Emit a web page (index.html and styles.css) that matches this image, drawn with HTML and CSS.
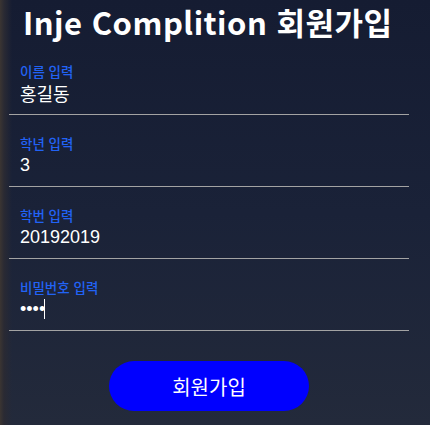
FILE: index.html
```html
<!DOCTYPE html>
<html lang="ko">
<head>
<meta charset="UTF-8" />
<meta name="viewport" content="width=device-width, initial-scale=1" />
<title>Inje Complition 회원가입</title>
<link rel="stylesheet" href="styles.css">
</head>
<body>

<div class="wrap">
  <h1>Inje Complition 회원가입</h1>
  <form class="signup">
    <div class="field">
      <label for="name">이름 입력</label>
      <input id="name" type="text" value="홍길동" class="ko">
    </div>
    <div class="field">
      <label for="grade">학년 입력</label>
      <input id="grade" type="text" value="3">
    </div>
    <div class="field">
      <label for="sid">학번 입력</label>
      <input id="sid" type="text" value="20192019">
    </div>
    <div class="field">
      <label for="pw">비밀번호 입력</label>
      <div class="input-box">
        <input id="pw" type="password" value="1234" autofocus>
        <span class="caret"></span>
      </div>
    </div>
    <div class="actions">
      <button type="button" class="btn">회원가입</button>
    </div>
  </form>
</div>

</body>
</html>
```

FILE: styles.css
```css
html, body {
  height: 100%;
}
body {
  margin: 0;
  font-family: "Noto Sans CJK KR", sans-serif;
  background:
    linear-gradient(to right, #3b3532 0, #2a2a33 4px, rgba(27, 32, 51, 0) 12px),
    linear-gradient(to bottom, #151c32 0%, #1a2238 50%, #232a3b 100%);
  overflow: hidden;
}
.wrap {
  width: 400px;
  padding-left: 9px;
}
h1 {
  margin: 0;
  padding-left: 14px;
  font-size: 31px;
  line-height: 43px;
  font-weight: 700;
  letter-spacing: 0.5px;
  color: #fff;
  white-space: nowrap;
}
.field {
  display: flex;
  flex-direction: column;
  padding: 19px 0 0 11px;
  height: 52px;
  border-bottom: 1px solid #a3a3a3;
}
.field label {
  font-size: 13.5px;
  line-height: 18px;
  font-weight: 500;
  color: #2263f5;
}
.field input {
  height: 26px;
  padding: 0;
  margin: 0;
  border: none;
  outline: none;
  background: transparent;
  color: #fff;
  caret-color: transparent;
  font-family: "Liberation Sans", Arial, sans-serif;
  font-size: 18px;
}
.field input.ko {
  font-family: "Noto Sans CJK KR", sans-serif;
}
.input-box {
  position: relative;
}
.caret {
  position: absolute;
  left: 24px;
  top: 3px;
  width: 1px;
  height: 20px;
  background: #fff;
}
.actions {
  display: flex;
  justify-content: center;
  padding-top: 30px;
}
.btn {
  width: 200px;
  height: 50px;
  border: none;
  border-radius: 25px;
  background: #0000ff;
  color: #fff;
  font-family: "Noto Sans CJK KR", sans-serif;
  font-size: 20px;
  cursor: pointer;
}
```
